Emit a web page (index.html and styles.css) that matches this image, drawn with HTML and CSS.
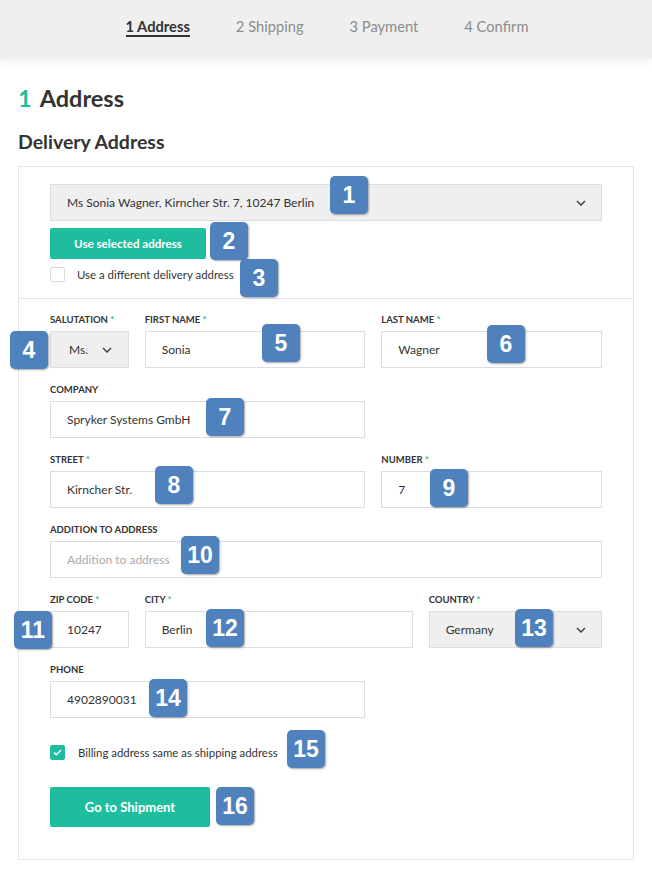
FILE: index.html
```html
<!DOCTYPE html>
<html lang="en">
<head>
<meta charset="utf-8">
<title>Checkout - Address</title>
<link rel="stylesheet" href="styles.css">
</head>
<body>
<div class="page">
  <header class="steps">
    <nav class="steps-nav">
      <span class="step active">1 Address</span>
      <span class="step">2 Shipping</span>
      <span class="step">3 Payment</span>
      <span class="step">4 Confirm</span>
    </nav>
  </header>

  <main class="main">
    <h1 class="title"><span class="num">1</span>Address</h1>
    <h2 class="subtitle">Delivery Address</h2>

    <section class="card">
      <div class="card-top">
        <div class="select wide">
          <span>Ms Sonia Wagner, Kirncher Str. 7, 10247 Berlin</span>
          <svg class="chev" width="10" height="6" viewBox="0 0 10 6"><path d="M1 1l4 4 4-4" fill="none" stroke="#444" stroke-width="1.5"/></svg>
        </div>
        <button class="btn small">Use selected address</button>
        <label class="check">
          <span class="box"></span>
          <span>Use a different delivery address</span>
        </label>
      </div>

      <div class="card-form">
        <div class="grid">
          <div class="field s2">
            <div class="lbl">SALUTATION <i>*</i></div>
            <div class="select center"><span>Ms.</span>
              <svg class="chev" width="10" height="6" viewBox="0 0 10 6"><path d="M1 1l4 4 4-4" fill="none" stroke="#444" stroke-width="1.5"/></svg>
            </div>
          </div>
          <div class="field s5">
            <div class="lbl">FIRST NAME <i>*</i></div>
            <div class="input">Sonia</div>
          </div>
          <div class="field s5">
            <div class="lbl">LAST NAME <i>*</i></div>
            <div class="input">Wagner</div>
          </div>

          <div class="field s7">
            <div class="lbl">COMPANY</div>
            <div class="input">Spryker Systems GmbH</div>
          </div>
          <div class="field s5 empty"></div>

          <div class="field s7">
            <div class="lbl">STREET <i>*</i></div>
            <div class="input">Kirncher Str.</div>
          </div>
          <div class="field s5">
            <div class="lbl">NUMBER <i>*</i></div>
            <div class="input">7</div>
          </div>

          <div class="field s12">
            <div class="lbl">ADDITION TO ADDRESS</div>
            <div class="input ph">Addition to address</div>
          </div>

          <div class="field s2">
            <div class="lbl">ZIP CODE <i>*</i></div>
            <div class="input">10247</div>
          </div>
          <div class="field s6">
            <div class="lbl">CITY <i>*</i></div>
            <div class="input">Berlin</div>
          </div>
          <div class="field s4">
            <div class="lbl">COUNTRY <i>*</i></div>
            <div class="select"><span>Germany</span>
              <svg class="chev" width="10" height="6" viewBox="0 0 10 6"><path d="M1 1l4 4 4-4" fill="none" stroke="#444" stroke-width="1.5"/></svg>
            </div>
          </div>

          <div class="field s7">
            <div class="lbl">PHONE</div>
            <div class="input">4902890031</div>
          </div>
        </div>

        <label class="check billing">
          <span class="box on"><svg width="9" height="7" viewBox="0 0 9 7"><path d="M1 3.5l2.3 2.3L8 1" fill="none" stroke="#fff" stroke-width="1.4"/></svg></span>
          <span>Billing address same as shipping address</span>
        </label>
        <button class="btn big">Go to Shipment</button>
      </div>
    </section>
  </main>

  <div class="badge" style="left:330px;top:176px">1</div>
  <div class="badge" style="left:210px;top:222px">2</div>
  <div class="badge" style="left:240px;top:259px">3</div>
  <div class="badge" style="left:10px;top:331px">4</div>
  <div class="badge" style="left:262px;top:324px">5</div>
  <div class="badge" style="left:487px;top:325px">6</div>
  <div class="badge" style="left:206px;top:398px">7</div>
  <div class="badge" style="left:155px;top:466px">8</div>
  <div class="badge" style="left:430px;top:469px">9</div>
  <div class="badge" style="left:181px;top:536px">10</div>
  <div class="badge" style="left:14px;top:611px">11</div>
  <div class="badge" style="left:206px;top:609px">12</div>
  <div class="badge" style="left:515px;top:609px">13</div>
  <div class="badge" style="left:149px;top:679px">14</div>
  <div class="badge" style="left:287px;top:730px">15</div>
  <div class="badge" style="left:216px;top:787px">16</div>
</div>
</body>
</html>
```

FILE: styles.css
```css
* { box-sizing: border-box; }
html, body { margin: 0; padding: 0; background: #fff; }
body {
  font-family: "Lato", "Liberation Sans", sans-serif;
  color: #333;
}
.page { position: relative; width: 652px; min-height: 875px; }

.steps {
  height: 59px;
  background: #efefef;
  box-shadow: 0 2px 12px rgba(0,0,0,0.07);
  display: flex;
  justify-content: center;
}
.steps-nav {
  display: flex;
  gap: 46px;
  padding-top: 18px;
  margin-left: 2px;
}
.step {
  font-size: 14.7px;
  color: #8c8c8c;
  line-height: 17px;
  height: 19px;
}
.step.active {
  color: #333;
  font-weight: 700;
  border-bottom: 2px solid #333;
}

.main { padding: 0 19px 0 18px; }
.title {
  margin: 26px 0 0;
  font-size: 23.5px;
  line-height: 26px;
  font-weight: 700;
  color: #333;
}
.title .num { color: #1ebd9e; margin-right: 8px; }
.subtitle {
  margin: 20px 0 0;
  font-size: 19.5px;
  line-height: 22px;
  font-weight: 700;
  color: #333;
}

.card {
  margin-top: 13px;
  border: 1px solid #e4e4e8;
  width: 616px;
}
.card-top {
  padding: 17px 31px 16px;
  border-bottom: 1px solid #e4e4e8;
}
.select {
  height: 37px;
  background: #efefef;
  border: 1px solid #dcdde0;
  display: flex;
  align-items: center;
  justify-content: space-between;
  padding: 0 15px 0 16px;
  font-size: 12px;
  color: #333;
}
.select.center { padding: 0 16px 0 18px; }
.chev { flex: none; }

.btn {
  display: block;
  border: 0;
  background: #1ebd9e;
  color: #fff;
  font-family: inherit;
  font-weight: 700;
  border-radius: 2px;
  padding: 0;
}
.btn.small {
  margin-top: 7px;
  width: 156px;
  height: 31px;
  font-size: 11.6px;
}
.btn.big {
  margin-top: 27px;
  width: 160px;
  height: 40px;
  font-size: 13px;
}

.check {
  display: flex;
  align-items: center;
  gap: 12px;
  margin-top: 8px;
  font-size: 11.4px;
  color: #333;
}
.box {
  width: 15px;
  height: 15px;
  border: 1px solid #d9dadd;
  border-radius: 2px;
  flex: none;
  display: flex;
  align-items: center;
  justify-content: center;
}
.box.on { background: #1ebd9e; border-color: #1ebd9e; }
.check.billing { margin-top: 27px; gap: 13px; }

.card-form { padding: 14px 31px 32px; }
.grid {
  display: grid;
  grid-template-columns: repeat(12, 1fr);
  column-gap: 16px;
  row-gap: 15px;
}
.s2 { grid-column: span 2; }
.s4 { grid-column: span 4; }
.s5 { grid-column: span 5; }
.s6 { grid-column: span 6; }
.s7 { grid-column: span 7; }
.s12 { grid-column: span 12; }

.lbl {
  font-size: 9.5px;
  font-weight: 700;
  line-height: 13px;
  height: 13px;
  margin-bottom: 5px;
  color: #333;
}
.lbl i { font-style: normal; color: #1ebd9e; }
.input {
  height: 37px;
  border: 1px solid #dcdde0;
  display: flex;
  align-items: center;
  padding: 0 16px;
  font-size: 12px;
  color: #333;
  background: #fff;
}
.input.ph { color: #aaa; }

.badge {
  position: absolute;
  width: 38px;
  height: 38px;
  border-radius: 5px;
  background: #4f81bd;
  color: #fff;
  font-family: "Liberation Sans", Arial, sans-serif;
  font-weight: 700;
  font-size: 23px;
  display: flex;
  align-items: center;
  justify-content: center;
  box-shadow: 1px 1px 2px rgba(0,0,0,0.35);
}
```
